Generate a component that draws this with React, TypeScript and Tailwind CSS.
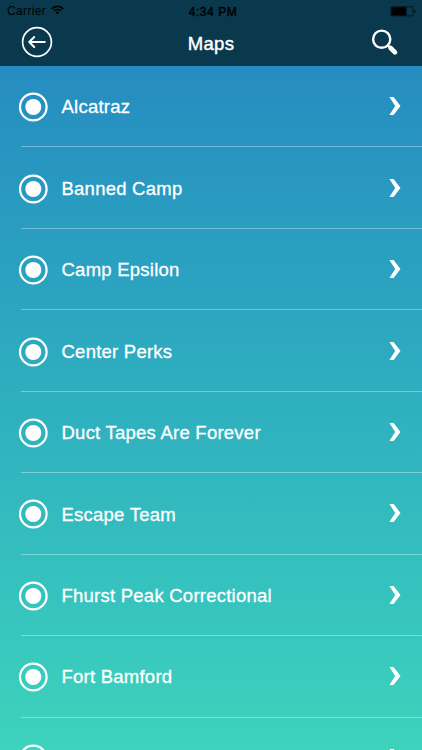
const maps = [
    'Alcatraz',
    'Banned Camp',
    'Camp Epsilon',
    'Center Perks',
    'Duct Tapes Are Forever',
    'Escape Team',
    'Fhurst Peak Correctional',
    'Fort Bamford',
    '', // still loading
];

function StatusBar() {
    return (
        <div className="grid h-[22px] grid-cols-3 items-center pl-[7px] pr-[6px] text-black">
            <div className="flex items-center gap-[5px] text-[12px] tracking-[0.35px]">
                <span>Carrier</span>
                <svg className="-mt-0.5" width="13" height="10" viewBox="0 0 13 10" fill="none" stroke="currentColor" strokeWidth="1.7">
                    <path d="M0.7 3.8a8.2 8.2 0 0 1 11.6 0" />
                    <path d="M2.8 6a5.3 5.3 0 0 1 7.4 0" />
                    <path d="M6.5 9.4 4.5 7.4a2.9 2.9 0 0 1 4 0Z" fill="currentColor" stroke="none" />
                </svg>
            </div>
            <span className="pl-[3px] pt-px text-center text-[12px] tracking-[0.55px] [-webkit-text-stroke:0.4px_black]">4:34 PM</span>
            <svg className="justify-self-end" width="26" height="11" viewBox="0 0 26 11">
                <rect x="0.9" y="0.7" width="22" height="9.2" rx="1.6" fill="none" stroke="black" strokeOpacity="0.6" />
                <rect x="1.4" y="1.2" width="15" height="8.2" rx="0.6" />
                <path d="M24.1 3.5c1.6.5 1.6 3 0 3.5z" />
            </svg>
        </div>
    );
}

function Header() {
    return (
        <header className="h-[66px] shrink-0 bg-[#0a394d]">
            <StatusBar />
            <div className="grid h-10 grid-cols-[60px_1fr_60px] items-center">
                <button className="pl-[21px]" aria-label="Back">
                    <svg width="32" height="32" viewBox="0 0 32 32" fill="none" stroke="white" strokeLinecap="round" strokeLinejoin="round">
                        <circle cx="16" cy="16" r="14.4" strokeWidth="1.7" />
                        <path d="M23.8 16H8.2M13.2 11 8.2 16l5 5" strokeWidth="2" />
                    </svg>
                </button>
                <h1 className="pt-[3px] text-center text-[18.5px] tracking-[0.3px] [-webkit-text-stroke:0.45px_white]">Maps</h1>
                <button className="pl-[9px]" aria-label="Search">
                    <svg width="28" height="28" viewBox="0 0 28 28" fill="none" stroke="white">
                        <circle cx="10.7" cy="11.2" r="8.6" strokeWidth="2.4" />
                        <path d="m16.8 17.3 2.6 2.6" strokeWidth="2.2" />
                        <path d="m19.6 20 4.4 4.4" strokeWidth="4.6" strokeLinecap="round" />
                    </svg>
                </button>
            </div>
        </header>
    );
}

function MapRow({ name }: { name: string }) {
    return (
        <li className="ml-[21px] flex h-[81.45px] shrink-0 items-center border-b border-white/35 pr-[20px]">
            <svg className="-ml-[3px] mt-[2px] shrink-0" width="30" height="30" viewBox="0 0 30 30">
                <circle cx="15.3" cy="15" r="13.3" fill="none" stroke="white" strokeWidth="2.2" />
                <circle cx="15.3" cy="15" r="8" fill="white" />
            </svg>
            <span className="mt-[2px] flex-1 pl-[13.5px] text-[18.5px] tracking-[0.24px] [-webkit-text-stroke:0.3px_white]">{name}</span>
            <svg width="14" height="20" viewBox="0 0 14 20" fill="white">
                <path d="M1.4 1h4.2l6.9 9-6.9 9H1.4l5.8-9z" />
            </svg>
        </li>
    );
}

export default function App() {
    return (
        <div className="flex h-screen w-full flex-col overflow-hidden bg-[#0a394d] font-['Liberation_Sans',sans-serif] text-white">
            <Header />
            <ul className="flex min-h-0 flex-1 flex-col overflow-hidden bg-linear-to-b from-[#268cc0] to-[#3dd3bc]">
                {maps.map((name, i) => (
                    <MapRow key={i} name={name} />
                ))}
            </ul>
        </div>
    );
}
